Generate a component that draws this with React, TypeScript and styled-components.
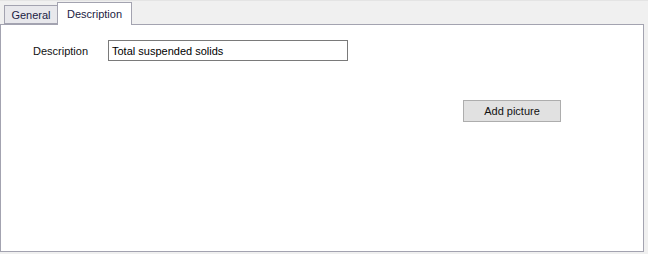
import React from "react";
import styled, { createGlobalStyle } from "styled-components";

const Global = createGlobalStyle`
  html, body { margin: 0; padding: 0; background: #f0f0f0; }
  body { font-family: "Liberation Sans", Arial, sans-serif; font-size: 11px; }
`;

const Window = styled.div`
  width: 648px;
  height: 254px;
  box-sizing: border-box;
  padding: 2px 4px 2px 0;
  display: flex;
  flex-direction: column;
  border-top: 1px solid #e4e4e4;
`;

const TabStrip = styled.div`
  display: flex;
  align-items: flex-end;
  height: 21px;
  padding-left: 4px;
  position: relative;
  z-index: 1;
`;

const Tab = styled.div<{ $active?: boolean }>`
  box-sizing: border-box;
  height: ${(p) => (p.$active ? "23px" : "19px")};
  width: ${(p) => (p.$active ? "75px" : "53px")};
  margin-bottom: ${(p) => (p.$active ? "-1px" : "0")};
  justify-content: center;
  padding-top: ${(p) => (p.$active ? "0" : "1px")};
  border: 1px solid #a3a3b0;
  border-bottom: ${(p) => (p.$active ? "none" : "1px solid #a3a3b0")};
  border-right: ${(p) => (p.$active ? "1px solid #a3a3b0" : "none")};
  background: ${(p) => (p.$active ? "#ffffff" : "#e8e8ec")};
  color: #1c1c44;
  display: flex;
  align-items: center;
`;

const Panel = styled.div`
  flex: 1;
  background: #ffffff;
  border: 1px solid #a3a3b0;
  box-sizing: border-box;
  padding: 15px 0 0 32px;
  display: flex;
  flex-direction: column;
`;

const FieldRow = styled.div`
  display: flex;
  align-items: center;
`;

const Label = styled.label`
  width: 75px;
  color: #111;
`;

const TextBox = styled.div`
  box-sizing: border-box;
  width: 240px;
  height: 21px;
  border: 1px solid #7a7a7a;
  padding: 0 3px;
  display: flex;
  align-items: center;
  color: #000;
`;

const ButtonRow = styled.div`
  display: flex;
  padding-left: 430px;
  margin-top: 39px;
`;

const Button = styled.button`
  box-sizing: border-box;
  width: 98px;
  height: 22px;
  background: #e1e1e1;
  border: 1px solid #adadad;
  font: inherit;
  color: #111;
  padding: 0;
`;

export default function App() {
  return (
    <>
      <Global />
      <Window>
        <TabStrip>
          <Tab>General</Tab>
          <Tab $active>Description</Tab>
        </TabStrip>
        <Panel>
          <FieldRow>
            <Label>Description</Label>
            <TextBox>Total suspended solids</TextBox>
          </FieldRow>
          <ButtonRow>
            <Button>Add picture</Button>
          </ButtonRow>
        </Panel>
      </Window>
    </>
  );
}
